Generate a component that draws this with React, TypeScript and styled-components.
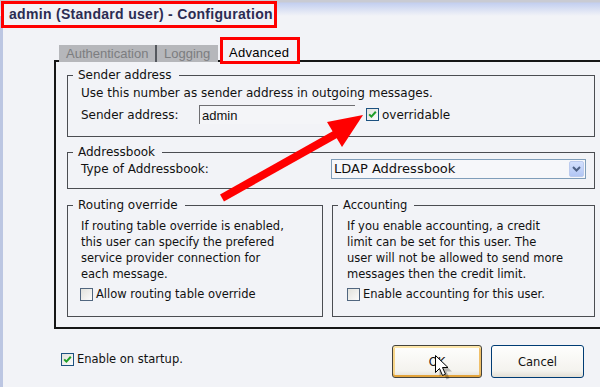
import React from 'react';
import styled, { createGlobalStyle } from 'styled-components';

const GlobalStyle = createGlobalStyle`
  html, body { margin: 0; padding: 0; background: #f2f3f7; }
  body { font-family: "DejaVu Sans", Verdana, sans-serif; }
`;

const Window = styled.div`
  position: relative;
  width: 600px;
  height: 387px;
  overflow: hidden;
  font: 12px/16px "DejaVu Sans", Verdana, sans-serif;
  color: #111;
  background:
    linear-gradient(#c9cbd3 0 2px, #c3cff0 3px, #f2f3f7 16px) top left / 100% 16px no-repeat,
    linear-gradient(90deg, #bcc6e2 0 3px, transparent 3px) top left / 3px 100% no-repeat,
    #f2f3f7;
`;

const TitleBox = styled.div`
  box-sizing: border-box;
  width: 276px;
  height: 27px;
  margin: 1px 0 0 1px;
  padding-left: 5px;
  border: 3px solid #ff0000;
  background: #f2f3f7;
  font: bold 14px/21px "Liberation Sans", Arial, sans-serif;
  letter-spacing: 0.3px;
  color: #2b2c52;
  white-space: nowrap;
`;

const TabRow = styled.div`
  position: relative;
  z-index: 1;
  display: flex;
  align-items: flex-end;
  height: 27px;
  margin: 9px 0 -4px 59px;
  font: 13px/16px "Liberation Sans", Arial, sans-serif;
`;

const Tab = styled.div<{ $active?: boolean; $w: number; $sep?: boolean }>`
  box-sizing: border-box;
  width: ${(p) => p.$w}px;
  white-space: nowrap;
  ${(p) =>
    p.$active
      ? `
    height: 27px;
    border: 3px solid #ff0000;
    background: #f2f3f7;
    padding: 5px 0 0 6px;
    color: #000;
    letter-spacing: 0.3px;
  `
      : `
    height: 17px;
    margin-bottom: 2px;
    margin-right: 2px;
    background: #b6b7bb;
    color: #7c7d80;
    padding-left: 7px;
    line-height: 17px;
  `}
  ${(p) => (p.$sep ? 'border-right: 2px solid #55585e; margin-right: 0;' : '')}
`;

const Panel = styled.div`
  box-sizing: border-box;
  width: 554px;
  height: 269px;
  margin-left: 54px;
  padding: 6px 11px 0 11px;
  border: 2px solid #161616;
  display: flex;
  flex-direction: column;
`;

const Group = styled.fieldset<{ $mt?: number }>`
  margin: ${(p) => p.$mt ?? 0}px 0 0;
  padding: 0 0 0 5px;
  border: 1px solid #4b4d52;
  min-width: 0;
`;

const Legend = styled.legend<{ $small?: boolean }>`
  padding: 0 7px 0 5px;
  font-size: ${(p) => (p.$small ? 11.5 : 12)}px;
  line-height: 14px;
`;

const GroupBody = styled.div<{ $pt: number; $pb: number; $pl?: number; $small?: boolean }>`
  padding: ${(p) => p.$pt}px 8px ${(p) => p.$pb}px ${(p) => p.$pl ?? 8}px;
  font-size: ${(p) => (p.$small ? 11.5 : 12)}px;
`;

const FieldRow = styled.div<{ $h: number; $mt?: number }>`
  display: flex;
  align-items: center;
  height: ${(p) => p.$h}px;
  margin-top: ${(p) => p.$mt ?? 0}px;
`;

const Label = styled.span<{ $w: number }>`
  width: ${(p) => p.$w}px;
  flex: none;
`;

const TextField = styled.div`
  box-sizing: border-box;
  width: 156px;
  height: 19px;
  padding: 1px 0 0 2px;
  border-top: 1px solid #6e6e72;
  border-left: 1px solid #6e6e72;
  background: #f4f5f8;
  font: 13px/17px "Liberation Sans", Arial, sans-serif;
`;

const Select = styled.div`
  box-sizing: border-box;
  display: flex;
  align-items: center;
  width: 262px;
  height: 20px;
  padding: 0 1px 0 2px;
  border: 1px solid #7f9db9;
  background: #f6f7fa;
  font-size: 13px;
`;

const SelectText = styled.span`
  flex: 1;
`;

const SelectButton = styled.span`
  box-sizing: border-box;
  display: flex;
  align-items: center;
  justify-content: center;
  width: 15px;
  height: 16px;
  border: 1px solid #bccbee;
  border-radius: 2px;
  background: linear-gradient(#d3e0fd, #b2c6f4);
`;

const Columns = styled.div`
  display: grid;
  grid-template-columns: 256px 1fr;
  column-gap: 9px;
  margin-top: 9px;
`;

const Paragraph = styled.p`
  margin: 0;
  line-height: 16px;
  white-space: nowrap;
`;

const CheckLine = styled.label<{ $ml?: number; $mt?: number }>`
  display: flex;
  align-items: center;
  gap: 3px;
  height: 16px;
  margin-left: ${(p) => p.$ml ?? 0}px;
  margin-top: ${(p) => p.$mt ?? 0}px;
  white-space: nowrap;
`;

const Box = styled.span<{ $dim?: boolean }>`
  box-sizing: border-box;
  display: inline-flex;
  align-items: center;
  justify-content: center;
  width: 13px;
  height: 13px;
  flex: none;
  border: 1px solid ${(p) => (p.$dim ? '#51667f' : '#1c5180')};
  background: linear-gradient(135deg, #e2e2dc, #fbfbfb);
`;

const Footer = styled.div`
  display: flex;
  align-items: center;
  height: 33px;
  margin-top: 16px;
  padding: 0 16px 0 61px;
  font-size: 11.5px;
`;

const Buttons = styled.div`
  display: flex;
  gap: 9px;
  margin-left: auto;
`;

const Button = styled.div<{ $w: number; $focus?: boolean }>`
  box-sizing: border-box;
  width: ${(p) => p.$w}px;
  height: 33px;
  display: flex;
  align-items: center;
  justify-content: center;
  border: 1px solid ${(p) => (p.$focus ? '#45433c' : '#003c74')};
  border-radius: 3px;
  background: linear-gradient(#fefefd, #f4f3ee 80%, #e3dfd4);
  ${(p) =>
    p.$focus
      ? 'box-shadow: inset 0 2px #fde6aa, inset 0 -2px #e3a43c, inset 2px 0 #f7d58a, inset -2px 0 #f0c069;'
      : ''}
`;

const Overlay = styled.svg`
  position: absolute;
  left: 0;
  top: 0;
  pointer-events: none;
`;

const Check = ({ on, dim }: { on?: boolean; dim?: boolean }) => (
  <Box $dim={dim}>
    {on && (
      <svg width="9" height="9" viewBox="0 0 9 9">
        <polyline points="1.2,4.4 3.4,6.6 7.8,1.8" fill="none" stroke="#1f9e27" strokeWidth="2" />
      </svg>
    )}
  </Box>
);

export default function App() {
  return (
    <Window>
      <GlobalStyle />
      <TitleBox>admin (Standard user) - Configuration</TitleBox>

      <TabRow>
        <Tab $w={98} $sep>Authentication</Tab>
        <Tab $w={61}>Logging</Tab>
        <Tab $w={80} $active>Advanced</Tab>
      </TabRow>

      <Panel>
        <Group>
          <Legend>Sender address</Legend>
          <GroupBody $pt={3} $pb={11}>
            <Paragraph>Use this number as sender address in outgoing messages.</Paragraph>
            <FieldRow $h={21} $mt={3}>
              <Label $w={118}>Sender address:</Label>
              <TextField>admin</TextField>
              <CheckLine $ml={11}>
                <Check on />
                overridable
              </CheckLine>
            </FieldRow>
          </GroupBody>
        </Group>

        <Group $mt={8}>
          <Legend>Addressbook</Legend>
          <GroupBody $pt={0} $pb={9}>
            <FieldRow $h={20}>
              <Label $w={250}>Type of Addressbook:</Label>
              <Select>
                <SelectText>LDAP Addressbook</SelectText>
                <SelectButton>
                  <svg width="9" height="6" viewBox="0 0 9 6">
                    <polyline points="1,1 4.5,4.5 8,1" fill="none" stroke="#4d6185" strokeWidth="2" />
                  </svg>
                </SelectButton>
              </Select>
            </FieldRow>
          </GroupBody>
        </Group>

        <Columns>
          <Group>
            <Legend>Routing override</Legend>
            <GroupBody $pt={6} $pb={14} $small>
              <Paragraph>
                If routing table override is enabled,
                <br />
                this user can specify the prefered
                <br />
                service provider connection for
                <br />
                each message.
              </Paragraph>
              <CheckLine $ml={-1} $mt={4}>
                <Check dim />
                Allow routing table override
              </CheckLine>
            </GroupBody>
          </Group>
          <Group>
            <Legend $small>Accounting</Legend>
            <GroupBody $pt={6} $pb={14} $pl={9} $small>
              <Paragraph>
                If you enable accounting, a credit
                <br />
                limit can be set for this user. The
                <br />
                user will not be allowed to send more
                <br />
                messages then the credit limit.
              </Paragraph>
              <CheckLine $mt={4}>
                <Check dim />
                Enable accounting for this user.
              </CheckLine>
            </GroupBody>
          </Group>
        </Columns>
      </Panel>

      <Footer>
        <CheckLine $mt={-5}>
          <Check on />
          Enable on startup.
        </CheckLine>
        <Buttons>
          <Button $w={90} $focus>OK</Button>
          <Button $w={93}>Cancel</Button>
        </Buttons>
      </Footer>

      {/* red annotation arrow */}
      <Overlay width="600" height="387" viewBox="0 0 600 387">
        <line x1="222" y1="198" x2="336" y2="134" stroke="#ff0000" strokeWidth="8" />
        <polygon points="327,122 363,115 342,147" fill="#ff0000" />
      </Overlay>

      {/* mouse pointer */}
      <Overlay width="600" height="387" viewBox="0 0 600 387">
        <path
          d="M437.5,357.5 l0,17 l4,-4 l3,7 l3,-1.3 l-3,-6.7 l5.5,0 z"
          fill="#000"
          opacity="0.25"
          transform="translate(2,2)"
        />
        <path
          d="M435.5,355.5 l0,17 l4,-4 l3,7 l3,-1.3 l-3,-6.7 l5.5,0 z"
          fill="#fff"
          stroke="#000"
          strokeWidth="1"
          strokeLinejoin="round"
        />
      </Overlay>
    </Window>
  );
}
